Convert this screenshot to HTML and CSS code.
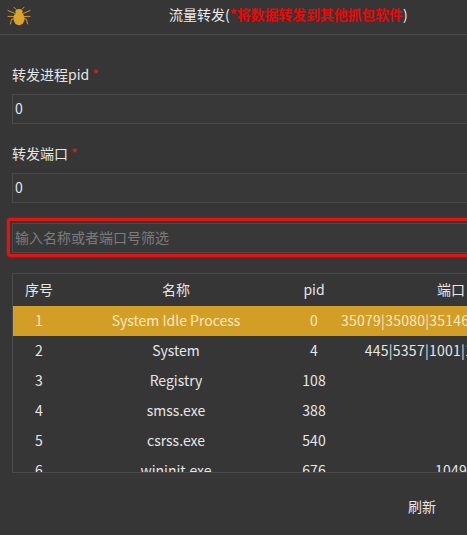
FILE: index.html
```html
<!DOCTYPE html>
<html lang="zh-CN">
<head>
<meta charset="utf-8">
<title>流量转发</title>
<link rel="stylesheet" href="styles.css">
</head>
<body>
<div class="page">
  <header class="top">
    <svg class="bug" viewBox="0 0 24 24" width="24" height="20" preserveAspectRatio="none" aria-hidden="true">
      <g fill="none" stroke="#d9a32c" stroke-width="1" stroke-linecap="round">
        <path d="M9 4 L7 1.5 M15 4 L17 1.5"/>
        <path d="M8 9 L4 7 L1 5.5 M16 9 L20 7 L23 5.5"/>
        <path d="M7.5 12.5 L1 12.5 M16.5 12.5 L23 12.5"/>
        <path d="M8 15 L4.5 16 L3.5 21.5 M16 15 L19.5 16 L20.5 21.5"/>
      </g>
      <ellipse cx="12" cy="6.5" rx="3.6" ry="3" fill="#d9a32c"/>
      <ellipse cx="12" cy="15" rx="5.5" ry="8" fill="#d9a32c"/>
    </svg>
    <h1 class="title">流量转发(<span class="warn">*将数据转发到其他抓包软件</span>)</h1>
  </header>
  <main class="form">
    <div class="field">
      <label class="label">转发进程pid <span class="req">*</span></label>
      <input class="input" value="0">
    </div>
    <div class="field">
      <label class="label">转发端口 <span class="req">*</span></label>
      <input class="input" value="0">
    </div>
    <div class="filter">
      <input class="input" placeholder="输入名称或者端口号筛选">
    </div>
    <div class="table-box">
      <table class="grid">
        <colgroup><col class="c1"><col class="c2"><col class="c3"><col class="c4"></colgroup>
        <thead>
          <tr><th>序号</th><th>名称</th><th>pid</th><th>端口</th></tr>
        </thead>
        <tbody>
          <tr class="sel"><td>1</td><td>System Idle Process</td><td>0</td><td>35079|35080|35146|35147|35148|3</td></tr>
          <tr><td>2</td><td>System</td><td>4</td><td>445|5357|1001|139|135|49</td></tr>
          <tr><td>3</td><td>Registry</td><td>108</td><td></td></tr>
          <tr><td>4</td><td>smss.exe</td><td>388</td><td></td></tr>
          <tr><td>5</td><td>csrss.exe</td><td>540</td><td></td></tr>
          <tr><td>6</td><td>wininit.exe</td><td>676</td><td>1049</td></tr>
        </tbody>
      </table>
    </div>
    <div class="actions"><button class="refresh">刷新</button></div>
  </main>
</div>
</body>
</html>
```

FILE: styles.css
```css
html, body {
  margin: 0;
  height: 535px;
  overflow: hidden;
  background: #363636;
}
body {
  font-family: "Noto Sans CJK SC", "Noto Sans", sans-serif;
  font-size: 14px;
  color: #e6e6e6;
}
.page { width: 600px; }
.top {
  height: 34px;
  border-bottom: 1px solid #4a4a4a;
  display: flex;
  align-items: center;
  padding-left: 7px;
}
.bug { flex: none; margin-bottom: 2px; }
.title {
  margin: 0 0 6px 138px;
  font-size: 14px;
  font-weight: 400;
  line-height: 20px;
  color: #ececec;
  white-space: nowrap;
}
.warn { color: #e80808; font-weight: 700; letter-spacing: -0.15px; }
.form { padding: 28px 0 0 12px; }
.field { margin-bottom: 18px; }
.label {
  display: block;
  height: 24px;
  line-height: 22px;
  margin-bottom: 7px;
  color: #e6e6e6;
}
.req { color: #e02020; }
.input {
  display: block;
  box-sizing: border-box;
  width: 100%;
  height: 30px;
  padding: 0 2px 2px;
  background: #383838;
  border: 1px solid #4a4a4a;
  color: #e6e6e6;
  font: inherit;
  outline: 0;
}
.input::placeholder { color: #7c7c7c; opacity: 1; }
.filter {
  position: relative;
  margin-top: 20px;
}
.filter::after {
  content: "";
  position: absolute;
  inset: -5px -10px -4px -5px;
  border: 3px solid #e01410;
  border-radius: 3px;
  box-shadow: 0 0 2px #e01410;
  pointer-events: none;
}
.table-box {
  margin-top: 20px;
  height: 200px;
  box-sizing: border-box;
  overflow: hidden;
  border: 1px solid #4a4a4a;
}
.grid {
  table-layout: fixed;
  width: 548px;
  border-collapse: collapse;
}
.c1 { width: 52px; }
.c2 { width: 222px; }
.c3 { width: 54px; }
.c4 { width: 220px; }
.grid th, .grid td {
  box-sizing: border-box;
  padding: 0 0 2px;
  text-align: center;
  font-weight: 400;
  white-space: nowrap;
  overflow: hidden;
}
.grid th { height: 32px; }
.grid td { height: 30px; }
.grid td:last-child { letter-spacing: 0.25px; }
.sel td { background: #d39e26; color: #f6e8c0; }
.actions {
  width: 455px;
  display: flex;
  justify-content: flex-end;
  margin-top: 24px;
}
.refresh {
  width: 64px;
  height: 20px;
  padding: 0 0 2px;
  margin-right: 13px;
  border: 0;
  background: transparent;
  color: #e6e6e6;
  font: inherit;
  line-height: 18px;
}
```
